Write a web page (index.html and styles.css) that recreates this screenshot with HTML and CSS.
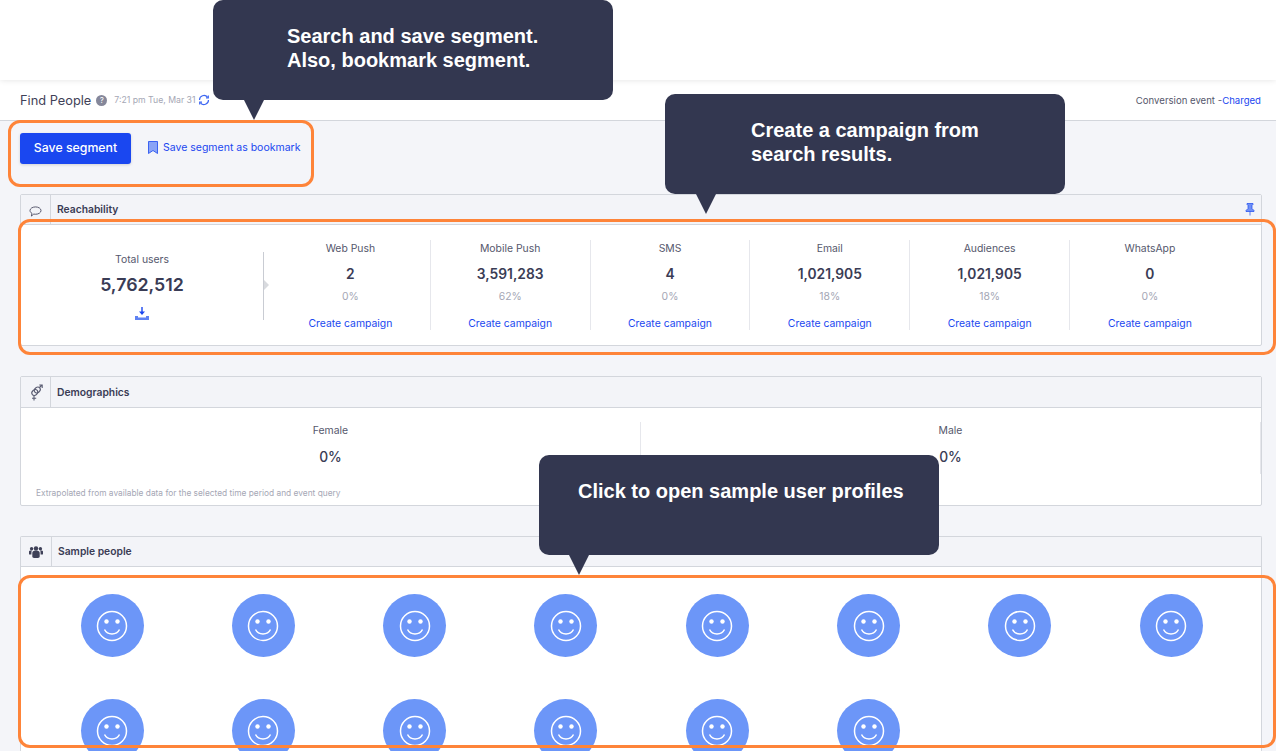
FILE: index.html
```html
<!DOCTYPE html>
<html lang="en">
    <head>
        <meta charset="UTF-8">
        <title>Find People</title>
        <link rel="stylesheet" href="styles.css">
    </head>
    <body>
        <div class="topbar"></div>
        <div class="page-head">
            <div class="page-title">
                <span class="title">Find People</span>
                <span class="help">?</span>
                <span class="stamp">7:21 pm Tue, Mar 31</span>
                <svg class="refresh" viewBox="0 0 12 12" width="12" height="12" fill="none" stroke="#3d66f2" stroke-width="1.2"><path d="M1.5 6a4.5 4.5 0 0 1 8-2.8M10.500 6a4.500 4.500 0 0 1-8 2.800"/><path d="M10.300 1.500v2.300H8M1.700 10.500V8.200H4"/></svg>
            </div>
            <div class="conversion">Conversion event -<a>Charged</a></div>
        </div>

        <div class="actions">
            <button class="save-btn">Save segment</button>
            <a class="bookmark">
                <svg viewBox="0 0 10 13" width="10" height="13"><path d="M.5.500h9v12L5 9.500.5 12.500z" fill="#8aa4f6" stroke="#1a47f0" stroke-width=".8"/></svg>
                Save segment as bookmark
            </a>
        </div>

        <section class="panel reach">
            <div class="panel-head">
                <div class="panel-icon">
                    <svg class="bubble" viewBox="0 0 14 12" width="13" height="11" fill="none" stroke="#4b4d63" stroke-width="1"><path d="M7 1c3.300 0 6 1.700 6 4s-2.700 4-6 4c-.7 0-1.300-.1-1.900-.2L2.500 11l.6-3C1.800 7.200 1 6.200 1 5c0-2.300 2.700-4 6-4z"/></svg>
                </div>
                <div class="panel-name">Reachability</div>
                <svg class="pin" viewBox="0 0 10 13" width="10" height="13" fill="#6f8ff5" stroke="#1a47f0" stroke-width=".7"><path d="M2 .5h6v1L7 2.500v3l2 2v1H1v-1l2-2v-3L2 1.500z"/><path d="M5 8.500v4" fill="none"/></svg>
            </div>
            <div class="reach-body">
                <div class="total">
                    <div class="label">Total users</div>
                    <div class="total-num">5,762,512</div>
                    <svg class="download" viewBox="0 0 14 13" width="14" height="13"><path d="M7 0v6.500" stroke="#1a47f0" stroke-width="1.400"/><path d="M4 4.500 7 8l3-3.500z" fill="#1a47f0"/><path d="M0 9h3v1.500h8V9h3v4H0z" fill="#5f82f2"/></svg>
                </div>
                <div class="channels">
                    <div class="channel">
                        <div class="label">Web Push</div>
                        <div class="num">2</div>
                        <div class="pct">0%</div>
                        <a class="link">Create campaign</a>
                    </div>
                    <div class="channel">
                        <div class="label">Mobile Push</div>
                        <div class="num">3,591,283</div>
                        <div class="pct">62%</div>
                        <a class="link">Create campaign</a>
                    </div>
                    <div class="channel">
                        <div class="label">SMS</div>
                        <div class="num">4</div>
                        <div class="pct">0%</div>
                        <a class="link">Create campaign</a>
                    </div>
                    <div class="channel">
                        <div class="label">Email</div>
                        <div class="num">1,021,905</div>
                        <div class="pct">18%</div>
                        <a class="link">Create campaign</a>
                    </div>
                    <div class="channel">
                        <div class="label">Audiences</div>
                        <div class="num">1,021,905</div>
                        <div class="pct">18%</div>
                        <a class="link">Create campaign</a>
                    </div>
                    <div class="channel">
                        <div class="label">WhatsApp</div>
                        <div class="num">0</div>
                        <div class="pct">0%</div>
                        <a class="link">Create campaign</a>
                    </div>
                </div>
            </div>
        </section>

        <section class="panel demo">
            <div class="panel-head">
                <div class="panel-icon">
                    <svg viewBox="0 0 14 17" width="14" height="17" fill="none" stroke="#5a5c72" stroke-width="1.100"><ellipse cx="5.800" cy="8.500" rx="3.200" ry="2.600" transform="rotate(-40 5.800 8.500)"/><ellipse cx="8.300" cy="6" rx="3.200" ry="2.600" transform="rotate(-40 8.300 6)"/><path d="M5 11.500v5M3 14.300h4.200M10.500 3.500 13 1M10.300 1h2.900v2.900"/></svg>
                </div>
                <div class="panel-name">Demographics</div>
            </div>
            <div class="demo-body">
                <div class="demo-row">
                    <div class="demo-col">
                        <div class="label">Female</div>
                        <div class="num">0%</div>
                    </div>
                    <div class="demo-col">
                        <div class="label">Male</div>
                        <div class="num">0%</div>
                    </div>
                </div>
                <div class="note">Extrapolated from available data for the selected time period and event query</div>
            </div>
        </section>

        <section class="panel people">
            <div class="panel-head">
                <div class="panel-icon wide">
                    <svg viewBox="0 0 14 12" width="14" height="12" fill="#3f4158"><circle cx="7" cy="2.500" r="2.200"/><circle cx="2.600" cy="2.800" r="1.700"/><circle cx="11.400" cy="2.800" r="1.700"/><path d="M3.300 7c0-1.600 1-2.200 3.700-2.200s3.700.6 3.700 2.200v3.500c0 1-1.200 1.500-3.700 1.500s-3.700-.5-3.700-1.500z"/><path d="M0 5.700c0-.8.800-1.100 2.800-1.100-.3.600-.4 1.500-.4 4H.8C.3 8.600 0 8.300 0 7.900zM14 5.700c0-.8-.8-1.100-2.800-1.100.3.600.4 1.500.4 4h1.600c.5 0 .8-.3.800-.7z"/></svg>
                </div>
                <div class="panel-name">Sample people</div>
            </div>
            <div class="people-grid" id="people"></div>
        </section>

        <div class="mark mark-save"></div>
        <div class="mark mark-reach"></div>
        <div class="mark mark-people"></div>

        <div class="tip tip-save">
            <div class="tip-text">Search and save segment.<br>Also, bookmark segment.</div>
        </div>
        <div class="tip tip-campaign">
            <div class="tip-text">Create a campaign from<br>search results.</div>
        </div>
        <div class="tip tip-profiles">
            <div class="tip-text">Click to open sample user profiles</div>
        </div>

        <script>
            var people = document.getElementById('people');
            var face = '<svg viewBox="0 0 32 32" width="32" height="32" fill="none" stroke="#fff" stroke-width="1.500"><circle cx="16" cy="16" r="14.500"/><circle cx="10.500" cy="11.500" r="2.200" fill="#fff" stroke="none"/><circle cx="21.500" cy="11.500" r="2.200" fill="#fff" stroke="none"/><path d="M8.500 19.500c1.500 3 4.200 4.500 7.500 4.500s6-1.500 7.500-4.500"/></svg>';
            for(let i = 0; i < 14; i++) {
                let cell = document.createElement('div');
                cell.className = 'person';
                cell.innerHTML = '<div class="avatar">' + face + '</div>';
                people.appendChild(cell);
            }
        </script>
    </body>
</html>
```

FILE: styles.css
```css
html, body {
    height: 751px;
    overflow: hidden;
}

body {
    margin: 0;
    position: relative;
    background: #f4f5f9;
    font-family: "Inter", "Liberation Sans", sans-serif;
    color: #3a3c55;
    font-size: 11px;
}

a {
    color: #1a47f0;
}

.topbar {
    height: 80px;
    position: relative;
    background: #fff;
    box-shadow: 0 0 6px rgba(0, 0, 0, .12);
}

.page-head {
    height: 40px;
    padding: 0 15px 0 20px;
    display: flex;
    align-items: center;
    justify-content: space-between;
    background: #fff;
    border-bottom: 1px solid #d3d6dc;
}

.page-title {
    display: flex;
    align-items: center;
}

.title {
    font-size: 12.800px;
    color: #3f4158;
}

.help {
    width: 11px;
    height: 11px;
    margin-left: 5px;
    border-radius: 50%;
    background: #85879a;
    color: #fff;
    font-size: 8px;
    line-height: 11px;
    text-align: center;
}

.stamp {
    margin-left: 7px;
    font-size: 8.700px;
    color: #a5a7b5;
}

.refresh {
    margin-left: 2px;
}

.conversion {
    font-size: 9.600px;
    color: #55576c;
}

.actions {
    height: 54px;
    padding: 12px 0 0 20px;
    box-sizing: border-box;
    display: flex;
    align-items: flex-start;
}

.save-btn {
    width: 111px;
    height: 31px;
    padding: 0 0 2px;
    border: 0;
    border-radius: 3px;
    background: #1a47f0;
    color: #fff;
    font-family: inherit;
    font-size: 12.300px;
    font-weight: 500;
    box-shadow: 0 1px 3px rgba(0, 0, 0, .15);
}

.bookmark {
    height: 29px;
    margin-left: 17px;
    display: flex;
    align-items: center;
    gap: 5px;
    font-size: 10.500px;
}

.panel {
    margin: 0 14px 30px 20px;
    background: #fff;
    border: 1px solid #d3d6dc;
    border-radius: 2px;
}

.reach {
    margin-top: 19px;
}

.panel-head {
    height: 29px;
    display: flex;
    align-items: center;
    background: #f3f4f8;
    border-bottom: 1px solid #d3d6dc;
}

.demo .panel-head {
    height: 30px;
}

.panel-icon {
    width: 29px;
    height: 100%;
    flex: none;
    display: flex;
    align-items: center;
    justify-content: center;
    border-right: 1px solid #d3d6dc;
}

.panel-icon.wide {
    width: 30px;
}

.bubble {
    margin-top: 4px;
}

.panel-name {
    margin-left: 6px;
    padding-bottom: 1px;
    flex: 1;
    font-size: 10.300px;
    font-weight: 600;
}

.pin {
    margin-right: 6px;
}

.reach-body {
    height: 120px;
    box-sizing: border-box;
    padding-top: 15px;
    display: flex;
}

.total {
    width: 243px;
    height: 68px;
    margin-top: 12px;
    box-sizing: border-box;
    padding-top: 1px;
    flex: none;
    text-align: center;
    border-right: 1px solid #c9ccd3;
    position: relative;
}

.total::after {
    content: '';
    position: absolute;
    right: -6px;
    top: 28px;
    border: 5px solid transparent;
    border-left-color: #d8dade;
    border-right: 0;
}

.label {
    font-size: 10.400px;
    color: #55576c;
    line-height: 13px;
}

.total-num {
    margin-top: 7px;
    font-size: 17.800px;
    font-weight: 600;
    line-height: 24px;
}

.download {
    display: block;
    margin: 10px auto 0;
}

.channels {
    margin-left: 7px;
    display: flex;
}

.channel {
    width: 159.800px;
    height: 90px;
    box-sizing: border-box;
    padding-top: 2px;
    text-align: center;
    border-right: 1px solid #e6e7ec;
}

.channel:last-child {
    border-right: 0;
}

.num {
    margin-top: 11px;
    font-size: 13.800px;
    font-weight: 600;
    line-height: 17px;
}

.pct {
    margin-top: 7px;
    font-size: 10.400px;
    line-height: 13px;
    color: #a5a7b5;
}

.link {
    display: block;
    margin-top: 14px;
    font-size: 10.400px;
    line-height: 13px;
}

.demo-body {
    height: 97px;
}

.demo-row {
    display: flex;
    padding-top: 14px;
}

.demo-col {
    width: 620px;
    height: 52px;
    box-sizing: border-box;
    padding-top: 2px;
    text-align: center;
    border-right: 1px solid #e6e7ec;
}

.demo-col:last-child {
    flex: 1;
}

.demo-col .num {
    margin-top: 12px;
    font-weight: 500;
}

.note {
    margin: 14px 0 0 15px;
    font-size: 8.350px;
    color: #a5a7b5;
}

.panel.people {
    height: 215px;
    margin-bottom: 0;
    overflow: hidden;
    border-bottom: 0;
}

.people-grid {
    padding: 27px 14.200px 0 15.400px;
    display: grid;
    grid-template-columns: repeat(8, 1fr);
    row-gap: 42px;
}

.person {
    display: flex;
    justify-content: center;
}

.avatar {
    width: 63px;
    height: 63px;
    border-radius: 50%;
    background: #6c96f8;
    display: flex;
    align-items: center;
    justify-content: center;
}

/* annotation overlays */
.mark {
    position: absolute;
    box-sizing: border-box;
    border: 3px solid #fe8439;
    border-radius: 12px;
}

.mark-save {
    left: 8px;
    top: 120px;
    width: 306px;
    height: 67px;
}

.mark-reach {
    left: 18px;
    top: 219px;
    width: 1258px;
    height: 136px;
}

.mark-people {
    left: 18px;
    top: 575px;
    width: 1258px;
    height: 173px;
}

.tip {
    position: absolute;
    width: 400px;
    height: 100px;
    border-radius: 10px;
    background: #333750;
    color: #fff;
    font-family: "Liberation Sans", sans-serif;
    font-size: 20px;
    font-weight: 700;
    line-height: 24px;
    box-sizing: border-box;
}

.tip::after {
    content: '';
    position: absolute;
    left: 31px;
    top: 100px;
    border-style: solid;
    border-width: 20px 10px 0;
    border-color: #333750 transparent transparent;
}

.tip-save {
    left: 213px;
    top: 0;
    padding: 24px 0 0 74px;
}

.tip-campaign {
    left: 665px;
    top: 94px;
    padding: 24px 0 0 86px;
}

.tip-profiles {
    left: 539px;
    top: 455px;
    padding: 24px 0 0 39px;
}

.tip-profiles::after {
    left: 30px;
}
```
